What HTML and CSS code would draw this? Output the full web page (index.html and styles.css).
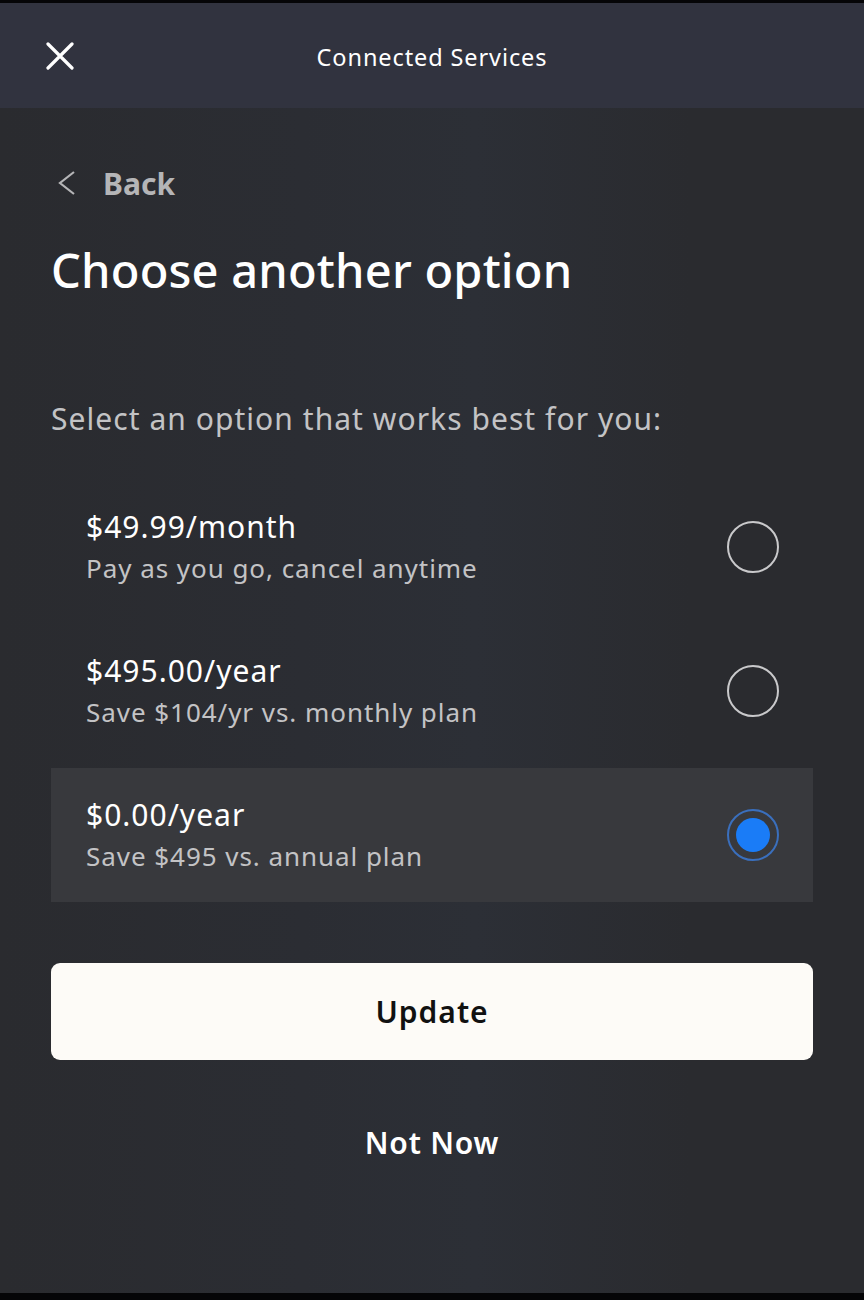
FILE: index.html
```html
<!DOCTYPE html>
<html>
  <head>
    <meta charset="utf-8">
    <title>Connected Services</title>
    <link rel="stylesheet" href="styles.css">
  </head>
  <body>
    <header class="topbar">
      <button class="close-btn" aria-label="Close">
        <svg width="28" height="28" viewBox="0 0 28 28">
          <path d="M2 2 L26 26 M26 2 L2 26" stroke="#fff" stroke-width="3.2" stroke-linecap="round" fill="none"/>
        </svg>
      </button>
      <div class="topbar-title">Connected Services</div>
      <div class="topbar-spacer"></div>
    </header>

    <main class="content">
      <a class="back" href="#">
        <svg width="20" height="26" viewBox="0 0 20 26">
          <path d="M17 2 L3 13 L17 24" stroke="#b5b5b7" stroke-width="2.2" fill="none" stroke-linejoin="miter"/>
        </svg>
        <span>Back</span>
      </a>

      <h1 class="heading">Choose another option</h1>

      <p class="prompt">Select an option that works best for you:</p>

      <div class="options">
        <label class="option">
          <div class="option-text">
            <div class="price">$49.99/month</div>
            <div class="note">Pay as you go, cancel anytime</div>
          </div>
          <span class="radio"></span>
        </label>
        <label class="option">
          <div class="option-text">
            <div class="price">$495.00/year</div>
            <div class="note">Save $104/yr vs. monthly plan</div>
          </div>
          <span class="radio"></span>
        </label>
        <label class="option selected">
          <div class="option-text">
            <div class="price">$0.00/year</div>
            <div class="note">Save $495 vs. annual plan</div>
          </div>
          <span class="radio checked"></span>
        </label>
      </div>

      <button class="update-btn">Update</button>
      <button class="later-btn">Not Now</button>
    </main>
  </body>
</html>
```

FILE: styles.css
```css
html {
  margin: 0;
  padding: 0;
  background: #050507;
}
body {
  --bg: #2a2b2f;
  --bar: #31333f;
  --muted: #c3c3c5;
  margin: 0;
  padding: 3px 0 2px;
  height: 1295px;
  box-sizing: border-box;
  display: flex;
  flex-direction: column;
  font-family: "Noto Sans", "Open Sans", sans-serif;
  color: #fff;
}

.topbar {
  height: 105px;
  flex-shrink: 0;
  display: flex;
  align-items: center;
  background: var(--bar);
  padding: 0 40px 0 40px;
}
.close-btn {
  width: 40px;
  height: 40px;
  padding: 0;
  border: 0;
  background: transparent;
  display: flex;
  align-items: center;
  justify-content: center;
}
.topbar-title {
  flex: 1;
  text-align: center;
  font-size: 23.5px;
  letter-spacing: 0.9px;
  padding-top: 3px;
}
.topbar-spacer {
  width: 40px;
}

.content {
  flex: 1;
  background: linear-gradient(90deg, #2a2b2f 0%, #2b2d33 35%, #2c2f36 55%, #2a2b2f 80%, #2a2b2f 100%);
  padding: 0 51px;
  display: flex;
  flex-direction: column;
}

.back {
  display: flex;
  align-items: center;
  gap: 26px;
  margin: 53px 0 0 6px;
  color: #b5b5b7;
  text-decoration: none;
  font-size: 30px;
  font-weight: 700;
  height: 44px;
}

.heading {
  margin: 35px 0 0 0;
  font-size: 47px;
  font-weight: 500;
  letter-spacing: 0.2px;
  line-height: 60px;
}

.prompt {
  margin: 99px 0 0 0;
  font-size: 30px;
  color: var(--muted);
  line-height: 40px;
  letter-spacing: 1.05px;
}

.options {
  margin-top: 41px;
  display: flex;
  flex-direction: column;
  gap: 10px;
}
.option {
  height: 134px;
  display: flex;
  align-items: center;
  padding: 0 34px 0 35px;
  box-sizing: border-box;
}
.option.selected {
  background: #38393d;
}
.option-text {
  flex: 1;
}
.price {
  font-size: 30px;
  line-height: 38px;
  letter-spacing: 1px;
}
.note {
  margin-top: 3px;
  font-size: 26px;
  line-height: 38px;
  color: var(--muted);
  letter-spacing: 0.95px;
}
.radio {
  width: 52px;
  height: 52px;
  border: 2px solid #c9c9cb;
  border-radius: 50%;
  box-sizing: border-box;
  display: flex;
  align-items: center;
  justify-content: center;
}
.radio.checked {
  border-color: #3a6fbd;
}
.radio.checked::after {
  content: "";
  width: 34px;
  height: 34px;
  border-radius: 50%;
  background: #1a7cf7;
}

.update-btn {
  margin-top: 61px;
  height: 97px;
  border: 0;
  border-radius: 9px;
  background: #fdfbf7;
  color: #111;
  font-family: inherit;
  font-size: 30px;
  font-weight: 600;
  letter-spacing: 1px;
}
.later-btn {
  margin-top: 52px;
  align-self: center;
  border: 0;
  background: transparent;
  color: #fff;
  font-family: inherit;
  font-size: 30px;
  font-weight: 600;
  letter-spacing: 0.8px;
  height: 60px;
}
```
